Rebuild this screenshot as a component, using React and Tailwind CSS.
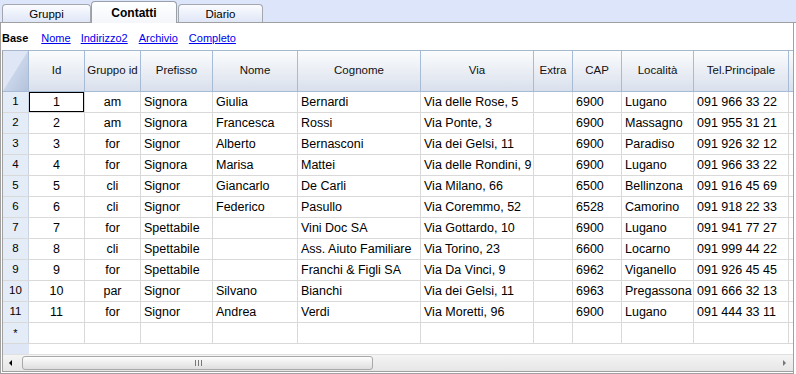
import React from "react";

const COLS = [
  { label: "Id", w: "w-[56px]", center: true },
  { label: "Gruppo id", w: "w-[56px]", center: true },
  { label: "Prefisso", w: "w-[72px]" },
  { label: "Nome", w: "w-[85px]" },
  { label: "Cognome", w: "w-[123px]" },
  { label: "Via", w: "w-[113px]" },
  { label: "Extra", w: "w-[39px]" },
  { label: "CAP", w: "w-[49px]" },
  { label: "Località", w: "w-[72px]" },
  { label: "Tel.Principale", w: "w-[95px]" },
  { label: "", w: "w-[100px]" },
];

const ROWS = [
  ["1", "am", "Signora", "Giulia", "Bernardi", "Via delle Rose, 5", "", "6900", "Lugano", "091 966 33 22"],
  ["2", "am", "Signora", "Francesca", "Rossi", "Via Ponte, 3", "", "6900", "Massagno", "091 955 31 21"],
  ["3", "for", "Signor", "Alberto", "Bernasconi", "Via dei Gelsi, 11", "", "6900", "Paradiso", "091 926 32 12"],
  ["4", "for", "Signora", "Marisa", "Mattei", "Via delle Rondini, 9", "", "6900", "Lugano", "091 966 33 22"],
  ["5", "cli", "Signor", "Giancarlo", "De Carli", "Via Milano, 66", "", "6500", "Bellinzona", "091 916 45 69"],
  ["6", "cli", "Signor", "Federico", "Pasullo", "Via Coremmo, 52", "", "6528", "Camorino", "091 918 22 33"],
  ["7", "for", "Spettabile", "", "Vini Doc SA", "Via Gottardo, 10", "", "6900", "Lugano", "091 941 77 27"],
  ["8", "cli", "Spettabile", "", "Ass. Aiuto Familiare", "Via Torino, 23", "", "6600", "Locarno", "091 999 44 22"],
  ["9", "for", "Spettabile", "", "Franchi & Figli SA", "Via Da Vinci, 9", "", "6962", "Viganello", "091 926 45 45"],
  ["10", "par", "Signor", "Silvano", "Bianchi", "Via dei Gelsi, 11", "", "6963", "Pregassona", "091 666 32 13"],
  ["11", "for", "Signor", "Andrea", "Verdi", "Via Moretti, 96", "", "6900", "Lugano", "091 444 33 11"],
];

function Tab({ label, active, className }) {
  if (active) {
    return (
      <div
        className={`relative z-10 -mb-px h-[22px] flex items-center justify-center rounded-t-[4px] border border-b-0 border-[#9aa0a8] bg-linear-to-b from-[#ffffff] to-[#f4f6fb] text-[12px] font-bold ${className}`}
      >
        {label}
      </div>
    );
  }
  return (
    <div
      className={`h-[18px] flex items-center justify-center pt-[2px] rounded-t-[4px] border border-b-0 border-[#a4a8ae] bg-linear-to-b from-[#fbfcff] to-[#dfe6f7] text-[11.5px] ${className}`}
    >
      {label}
    </div>
  );
}

export default function App() {
  return (
    <div className="w-[796px] h-[374px] overflow-hidden bg-white text-black font-['Liberation_Sans',Arial,sans-serif]">
      {/* TABS */}
      <div className="h-[23px] flex items-end bg-[#dde5fb] border-b border-[#a0a0a0]">
        <Tab label="Gruppi" className="ml-[2px] w-[89px]" />
        <Tab label="Contatti" active className="w-[86px]" />
        <Tab label="Diario" className="ml-[1px] w-[85px]" />
      </div>

      {/* FRAME */}
      <div className="w-[794px] h-[351px] border-x border-b border-[#a0a0a0]">
        {/* VIEWS */}
        <div className="h-[27px] flex items-center pt-[4px] pl-[1px] text-[11px]">
          <span className="font-bold">Base</span>
          <a className="ml-[13px] text-[#0000ee] underline">Nome</a>
          <a className="ml-[10px] text-[#0000ee] underline">Indirizzo2</a>
          <a className="ml-[11px] text-[#0000ee] underline">Archivio</a>
          <a className="ml-[11px] text-[#0000ee] underline">Completo</a>
        </div>

        {/* GRID */}
        <div className="ml-[1px] w-[791px] border-l border-t border-b border-[#a0a0a0] border-t-[#a8b8cc] overflow-hidden">
          {/* HEADER */}
          <div className="flex h-[41px] border-b border-[#a6bcd6] bg-linear-to-b from-[#fbfcfd] to-[#d9e0ec]">
            <div className="relative w-[26px] shrink-0 border-r border-[#a6bcd6] bg-[#dfe7f6]">
              <svg className="absolute inset-0" width="25" height="40" viewBox="0 0 25 40">
                <defs>
                  <linearGradient id="cg" x1="0" y1="0" x2="1" y2="1">
                    <stop offset="0" stopColor="#dfe7f6" />
                    <stop offset="1" stopColor="#b3c3dc" />
                  </linearGradient>
                </defs>
                <polygon points="25,0 25,40 0,40" fill="url(#cg)" />
              </svg>
            </div>
            {COLS.map((c, i) => (
              <div
                key={i}
                className={`${c.w} shrink-0 border-r border-[#a6bcd6] flex items-center justify-center text-[11.5px] text-[#111]`}
              >
                {c.label}
              </div>
            ))}
          </div>

          {/* ROWS */}
          {ROWS.map((r, ri) => (
            <div key={ri} className="flex h-[21px] border-b border-[#d9d9d9]">
              <div className="w-[26px] shrink-0 border-r border-[#c9d3e2] bg-[#e4ecf7] flex items-center justify-center text-[11.5px]">
                {ri + 1}
              </div>
              {COLS.map((c, ci) => (
                <div
                  key={ci}
                  className={`${c.w} shrink-0 border-r border-[#d9d9d9] flex items-center overflow-hidden whitespace-nowrap text-[12.5px] ${
                    c.center ? "justify-center" : "pl-[3px]"
                  } ${ri === 0 && ci === 0 ? "shadow-[inset_0_0_0_1px_#000]" : ""}`}
                >
                  {r[ci] || ""}
                </div>
              ))}
            </div>
          ))}

          {/* NEW ROW */}
          <div className="flex h-[21px] border-b border-[#d9d9d9]">
            <div className="w-[26px] shrink-0 border-r border-[#c9d3e2] bg-[#e4ecf7] flex items-center justify-center text-[11px]">
              *
            </div>
            {COLS.map((c, ci) => (
              <div key={ci} className={`${c.w} shrink-0 border-r border-[#d9d9d9]`} />
            ))}
          </div>

          {/* EMPTY AREA */}
          <div className="flex h-[10px]">
            <div className="w-[26px] shrink-0 bg-[#dfe7f6]" />
          </div>

          {/* SCROLLBAR */}
          <div className="relative h-[17px] bg-linear-to-b from-[#f4f4f4] to-[#e6e6e6] border-t border-[#e0e0e0]">
            <div className="absolute left-[6px] top-[5px] w-0 h-0 border-y-[3px] border-y-transparent border-r-[3px] border-r-black" />
            <div className="absolute left-[19px] top-[1px] w-[351px] h-[14px] rounded-[3px] border border-[#a9a9a9] bg-linear-to-b from-[#fdfdfd] to-[#dedede]">
              <div className="absolute left-[172px] top-[3px] flex gap-[2px]">
                <div className="w-px h-[6px] bg-[#777]" />
                <div className="w-px h-[6px] bg-[#777]" />
                <div className="w-px h-[6px] bg-[#777]" />
              </div>
            </div>
            <div className="absolute left-[780px] top-[5px] w-0 h-0 border-y-[3px] border-y-transparent border-l-[3px] border-l-[#777]" />
          </div>
        </div>
      </div>
    </div>
  );
}
